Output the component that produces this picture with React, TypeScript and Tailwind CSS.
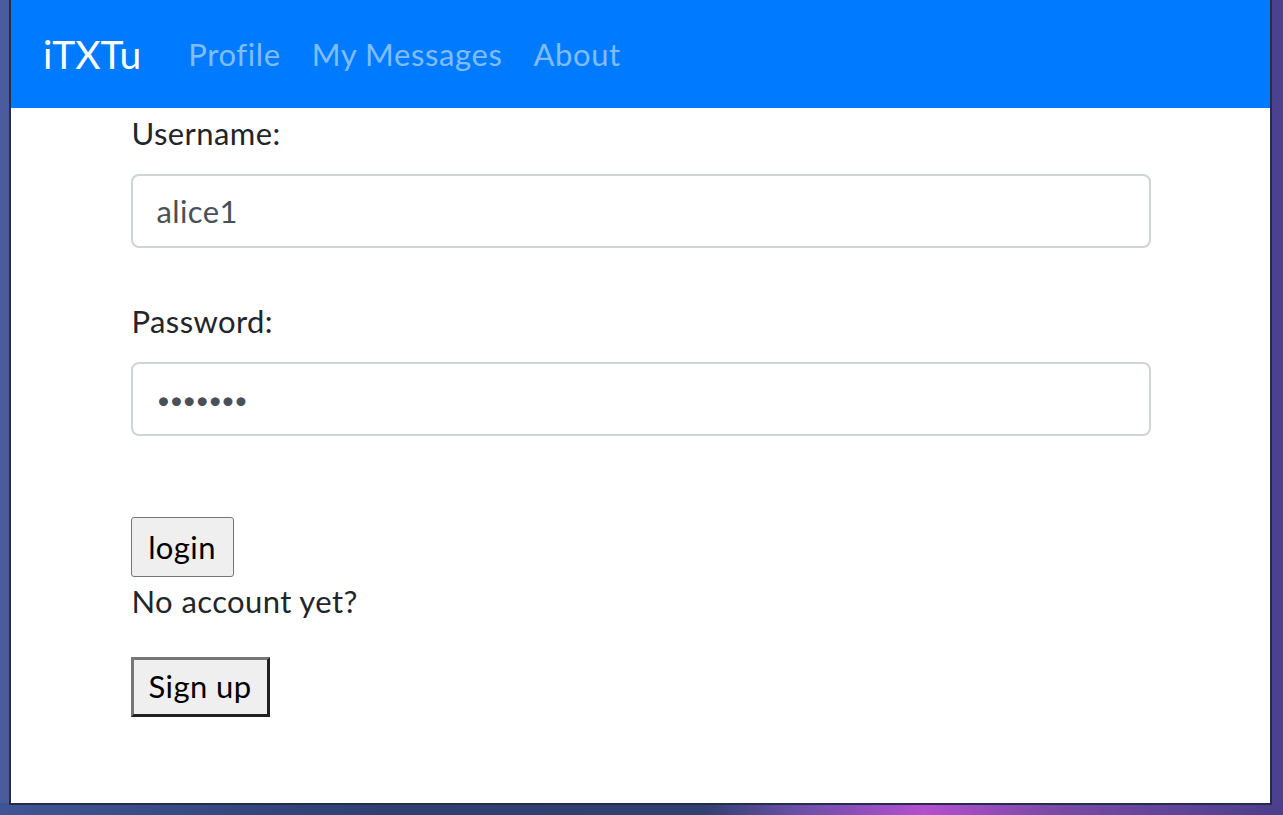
import React from "react";

export default function App() {
  const font = { fontFamily: 'Lato, "Noto Sans", sans-serif' };
  return (
    <div
      className="relative w-full h-[815px] overflow-hidden bg-[linear-gradient(90deg,#4a5c9e_0%,#4a4f98_50%,#4c418e_100%)] pl-[9px]"
      style={font}
    >
      <div className="absolute left-0 right-0 bottom-0 h-[12px] bg-[linear-gradient(90deg,#3f5596_0%,#34477f_18%,#2f3f72_30%,#304070_55%,#6a4fa8_62%,#b44fd0_72%,#7a4aa8_82%,#4a3f8c_100%)]" />
      <div className="relative w-[1263px] h-[805px] border-l-2 border-r-2 border-b-2 border-[#262d4a] bg-white flex flex-col">
        <nav className="h-[108px] bg-[#007bff] flex items-center pl-[32px]">
          <span className="text-[39px] leading-[1.5] text-white mr-[31px]">iTXTu</span>
          <ul className="flex items-center">
            <li className="pl-[16px] pr-[15px] text-[31px] leading-[1.5] tracking-[0.6px] text-[#80bdff]">Profile</li>
            <li className="pl-[16px] pr-[15px] text-[31px] leading-[1.5] tracking-[0.6px] text-[#80bdff]">My Messages</li>
            <li className="pl-[16px] pr-[15px] text-[31px] leading-[1.5] tracking-[0.6px] text-[#80bdff]">About</li>
          </ul>
        </nav>
        <div className="w-[1020px] mx-auto pt-[2px] text-[31px] leading-[1.5] tracking-[0.4px] text-[#212529]">
          <div className="pl-[1px] mb-[17.5px]">Username:</div>
          <div className="h-[74px] border-2 border-[#ced4da] rounded-[8px] flex items-center pl-[24px] text-[#495057]">
            alice1
          </div>
          <div className="pl-[1px] mt-[50px] mb-[17.5px]">Password:</div>
          <div className="h-[74px] border-2 border-[#ced4da] rounded-[8px] flex items-center pl-[24px] text-[#495057]">
            <span className="text-[24px] tracking-[-1px] pt-[2px]">•••••••</span>
          </div>
          <div className="mt-[81px]">
            <button className="w-[103px] h-[60px] bg-[#efefef] border border-[#767676] rounded-[3px] text-black text-[31px] leading-none tracking-[0.4px] flex items-center justify-center">
              login
            </button>
          </div>
          <div className="pl-[1px] mt-[1px]">No account yet?</div>
          <div className="mt-[32px]">
            <button className="w-[139px] h-[60px] bg-[#efefef] border-[3px] border-t-[#767676] border-l-[#767676] border-r-[#202020] border-b-[#202020] text-black text-[31px] leading-none tracking-[0.4px] flex items-center justify-center">
              Sign up
            </button>
          </div>
        </div>
      </div>
    </div>
  );
}
